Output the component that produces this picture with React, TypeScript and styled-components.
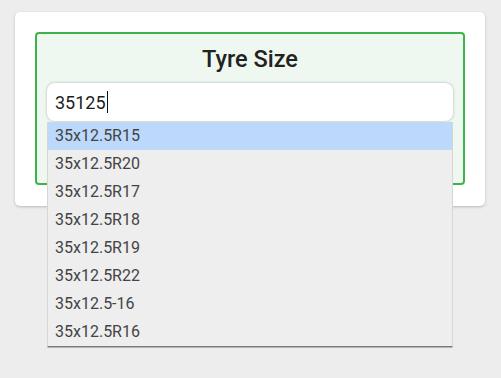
import React from "react";
import styled, { createGlobalStyle } from "styled-components";

const Global = createGlobalStyle`
  html, body { margin: 0; padding: 0; background: #ededed; }
  body { font-family: Roboto, "Liberation Sans", Arial, sans-serif; }
  * { box-sizing: border-box; }
`;

const Page = styled.div`
  padding: 12px 16px 0 15px;
  min-height: 378px;
`;

const Card = styled.div`
  width: 470px;
  background: #ffffff;
  border-radius: 5px;
  box-shadow: 0 1px 3px rgba(0, 0, 0, 0.22);
  padding: 20px 20px 21px 20px;
`;

const Panel = styled.div`
  border: 2px solid #3db44b;
  border-radius: 4px;
  background: #eff8f0;
  padding: 11px 10px 62px 10px;
  display: flex;
  flex-direction: column;
  align-items: stretch;
`;

const Title = styled.h2`
  margin: 0 0 10px 0;
  font-size: 23.5px;
  font-weight: 500;
  color: #222222;
  text-align: center;
  line-height: 28px;
`;

const Field = styled.div`
  position: relative;
`;

const Input = styled.div`
  height: 38px;
  background: #ffffff;
  border-radius: 8px;
  box-shadow: 0 0 3px rgba(0, 0, 0, 0.28);
  padding: 0 8px;
  display: flex;
  align-items: center;
  font-size: 18px;
  color: #1e1e1e;
`;

const Caret = styled.span`
  display: inline-block;
  width: 1px;
  height: 22px;
  background: #111;
  margin-left: 1px;
`;

const Menu = styled.ul`
  position: absolute;
  top: 39px;
  left: 0;
  right: 0;
  margin: 0;
  padding: 0;
  list-style: none;
  background: #eeeeee;
  border-left: 1px solid #d6d6d6;
  border-right: 1px solid #d6d6d6;
  box-shadow: 0 2px 0 -0.5px #7a7a7a;
  z-index: 2;
`;

const Item = styled.li<{ $active?: boolean }>`
  height: 28px;
  line-height: 28px;
  padding-left: 7px;
  font-size: 16px;
  color: #444444;
  background: ${(p) => (p.$active ? "#bcd9fb" : "transparent")};
`;

const options = [
  "35x12.5R15",
  "35x12.5R20",
  "35x12.5R17",
  "35x12.5R18",
  "35x12.5R19",
  "35x12.5R22",
  "35x12.5-16",
  "35x12.5R16",
];

export default function App() {
  return (
    <Page>
      <Global />
      <Card>
        <Panel>
          <Title>Tyre Size</Title>
          <Field>
            <Input>
              35125
              <Caret />
            </Input>
            <Menu>
              {options.map((o, i) => (
                <Item key={o} $active={i === 0}>
                  {o}
                </Item>
              ))}
            </Menu>
          </Field>
        </Panel>
      </Card>
    </Page>
  );
}
